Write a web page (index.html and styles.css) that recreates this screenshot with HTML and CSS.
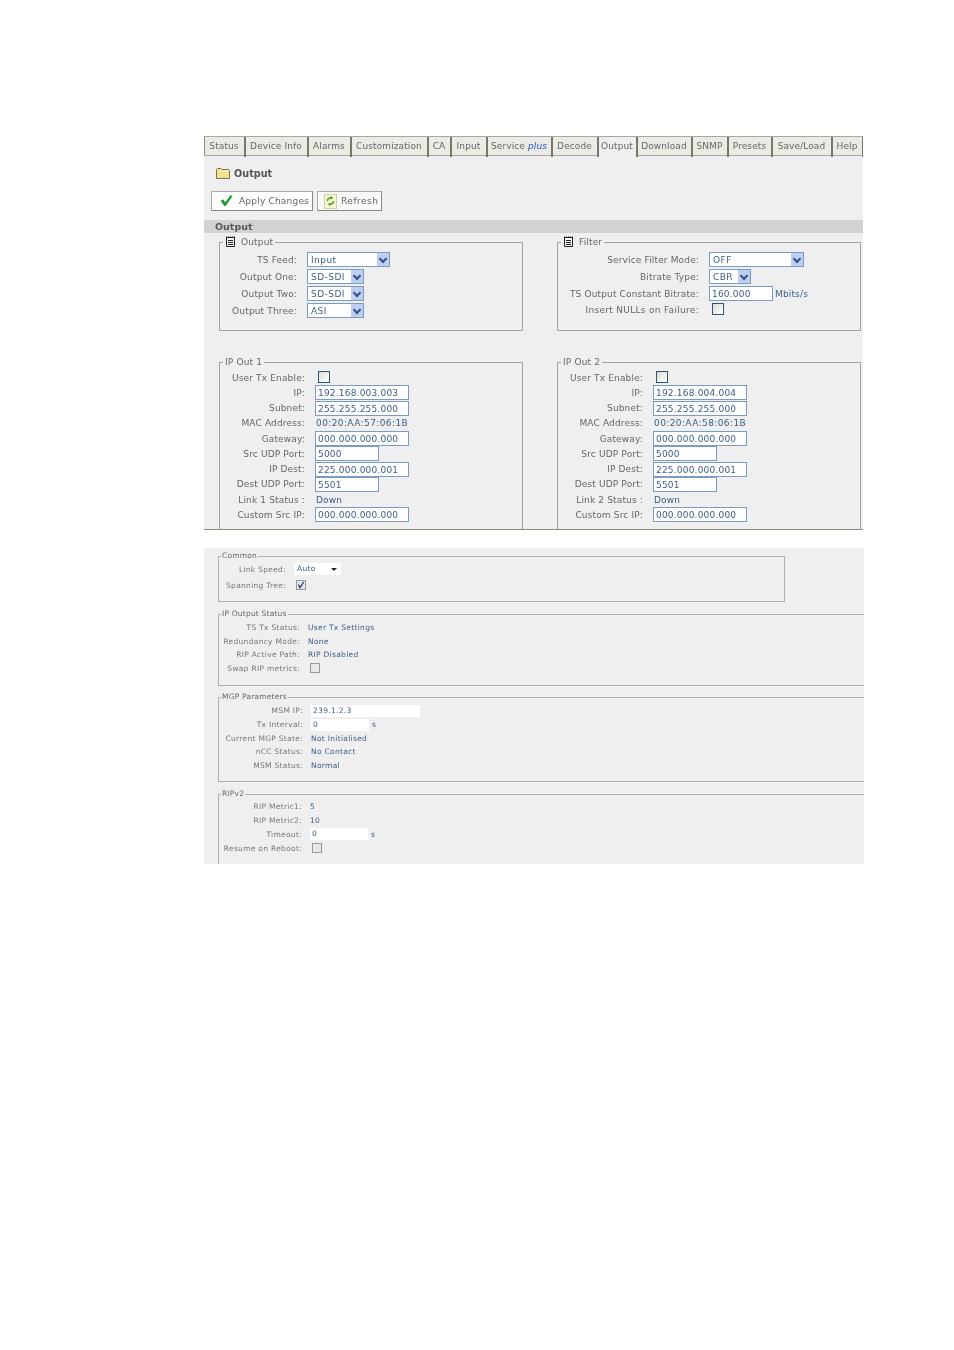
FILE: index.html
```html
<!DOCTYPE html>
<html lang="en">
<head>
<meta charset="utf-8">
<title>Output</title>
<link rel="stylesheet" href="styles.css">
</head>
<body>
<main class="page">
  <section class="panel">
    <nav class="tabs">
      <a class="tab">Status</a><a class="tab">Device Info</a><a class="tab">Alarms</a><a class="tab">Customization</a><a class="tab">CA</a><a class="tab">Input</a><a class="tab">Service <em>plus</em></a><a class="tab">Decode</a><a class="tab active">Output</a><a class="tab">Download</a><a class="tab">SNMP</a><a class="tab">Presets</a><a class="tab">Save/Load</a><a class="tab">Help</a>
    </nav>
    <h1 class="title">
      <svg class="folder" viewBox="0 0 14 11" width="14" height="11"><path d="M.5 10.5V1.5L1.5.5H5L6 1.5H12.5L13.500 2.500V10.500Z" fill="#f3e28c" stroke="#77735a"/><path d="M1 3H13" stroke="#fff6c0"/></svg>
      Output
    </h1>
    <div class="actions">
      <button class="btn btn-apply"><svg viewBox="0 0 14 13" width="13" height="11"><path d="M0 7L3 5L5.500 8.500L12 0L14 1.500L6 13H4.500Z" fill="#1f9a2e"/></svg>Apply Changes</button>
      <button class="btn btn-refresh"><span class="refresh-icon"><svg viewBox="0 0 12 13" width="12" height="13"><path d="M6 1L9 3L6 5V3.800C4.500 3.800 3.500 5 3.500 6.500H2C2 4 3.500 2.400 6 2.300Z" fill="#3a9a2a"/><path d="M6 12L3 10L6 8V9.200C7.500 9.200 8.500 8 8.500 6.500H10C10 9 8.500 10.600 6 10.700Z" fill="#3a9a2a"/></svg></span>Refresh</button>
    </div>
    <h2 class="band">Output</h2>

    <div class="columns top">
      <fieldset class="box box-output">
        <legend><svg class="note" viewBox="0 0 11 11" width="11" height="11"><path d="M1.500 1.500H9.500V10.500H1.500Z" fill="#fff" stroke="#222"/><path d="M1.500 .5V2M3.500 .5V2M5.500 .5V2M7.500 .5V2M9.500 .5V2M3 4.500H8M3 6.500H8M3 8.500H8" stroke="#222" fill="none"/></svg> Output</legend>
        <div class="form form-a">
          <span class="lbl">TS Feed:</span><span class="select w83"><span>Input</span><i class="arrow"></i></span>
          <span class="lbl">Output One:</span><span class="select w57"><span>SD-SDI</span><i class="arrow"></i></span>
          <span class="lbl">Output Two:</span><span class="select w57"><span>SD-SDI</span><i class="arrow"></i></span>
          <span class="lbl">Output Three:</span><span class="select w57"><span>ASI</span><i class="arrow"></i></span>
        </div>
      </fieldset>
      <fieldset class="box box-filter">
        <legend><svg class="note" viewBox="0 0 11 11" width="11" height="11"><path d="M1.500 1.500H9.500V10.500H1.500Z" fill="#fff" stroke="#222"/><path d="M1.500 .5V2M3.500 .5V2M5.500 .5V2M7.500 .5V2M9.500 .5V2M3 4.500H8M3 6.500H8M3 8.500H8" stroke="#222" fill="none"/></svg> Filter</legend>
        <div class="form form-b">
          <span class="lbl">Service Filter Mode:</span><span class="select w95"><span>OFF</span><i class="arrow"></i></span>
          <span class="lbl">Bitrate Type:</span><span class="select w42"><span>CBR</span><i class="arrow"></i></span>
          <span class="lbl">TS Output Constant Bitrate:</span><span class="inline"><span class="field w64">160.000</span><span class="val">Mbits/s</span></span>
          <span class="lbl lbl-wide">Insert NULLs on Failure:</span><span class="check"></span>
        </div>
      </fieldset>
    </div>

    <div class="columns bottom">
      <fieldset class="box box-ip">
        <legend>IP Out 1</legend>
        <div class="form form-ip">
          <span class="lbl">User Tx Enable:</span><span class="check"></span>
          <span class="lbl">IP:</span><span class="field w94">192.168.003.003</span>
          <span class="lbl">Subnet:</span><span class="field w94">255.255.255.000</span>
          <span class="lbl">MAC Address:</span><span class="val mac">00:20:AA:57:06:1B</span>
          <span class="lbl">Gateway:</span><span class="field w94">000.000.000.000</span>
          <span class="lbl">Src UDP Port:</span><span class="field w64">5000</span>
          <span class="lbl">IP Dest:</span><span class="field w94">225.000.000.001</span>
          <span class="lbl">Dest UDP Port:</span><span class="field w64">5501</span>
          <span class="lbl">Link 1 Status :</span><span class="val">Down</span>
          <span class="lbl">Custom Src IP:</span><span class="field w94">000.000.000.000</span>
        </div>
      </fieldset>
      <fieldset class="box box-ip">
        <legend>IP Out 2</legend>
        <div class="form form-ip">
          <span class="lbl">User Tx Enable:</span><span class="check"></span>
          <span class="lbl">IP:</span><span class="field w94">192.168.004.004</span>
          <span class="lbl">Subnet:</span><span class="field w94">255.255.255.000</span>
          <span class="lbl">MAC Address:</span><span class="val mac">00:20:AA:58:06:1B</span>
          <span class="lbl">Gateway:</span><span class="field w94">000.000.000.000</span>
          <span class="lbl">Src UDP Port:</span><span class="field w64">5000</span>
          <span class="lbl">IP Dest:</span><span class="field w94">225.000.000.001</span>
          <span class="lbl">Dest UDP Port:</span><span class="field w64">5501</span>
          <span class="lbl">Link 2 Status :</span><span class="val">Down</span>
          <span class="lbl">Custom Src IP:</span><span class="field w94">000.000.000.000</span>
        </div>
      </fieldset>
    </div>
  </section>

  <section class="panel2">
    <fieldset class="fs fs-common">
      <legend>Common</legend>
      <div class="form2 f-common">
        <span class="lbl">Link Speed:</span><span class="dd">Auto<i class="dd-arrow"></i></span>
        <span class="lbl">Spanning Tree:</span><span class="tick"><svg viewBox="0 0 9 9" width="9" height="9"><path d="M1.500 4L3.500 7.500L7.500 1" fill="none" stroke="#33447a" stroke-width="1.500"/></svg></span>
      </div>
    </fieldset>
    <fieldset class="fs fs-status">
      <legend>IP Output Status</legend>
      <div class="form2 f-status">
        <span class="lbl">TS Tx Status:</span><span class="val">User Tx Settings</span>
        <span class="lbl">Redundancy Mode:</span><span class="val">None</span>
        <span class="lbl">RIP Active Path:</span><span class="val">RIP Disabled</span>
        <span class="lbl">Swap RIP metrics:</span><span class="tick"></span>
      </div>
    </fieldset>
    <fieldset class="fs fs-mgp">
      <legend>MGP Parameters</legend>
      <div class="form2 f-mgp">
        <span class="lbl">MSM IP:</span><span class="inp w109">239.1.2.3</span>
        <span class="lbl">Tx Interval:</span><span class="inline2"><span class="inp w58">0</span><span class="val">s</span></span>
        <span class="lbl">Current MGP State:</span><span class="val">Not Initialised</span>
        <span class="lbl">nCC Status:</span><span class="val">No Contact</span>
        <span class="lbl">MSM Status:</span><span class="val">Normal</span>
      </div>
    </fieldset>
    <fieldset class="fs fs-rip">
      <legend>RIPv2</legend>
      <div class="form2 f-rip">
        <span class="lbl">RIP Metric1:</span><span class="val">5</span>
        <span class="lbl">RIP Metric2:</span><span class="val">10</span>
        <span class="lbl">Timeout:</span><span class="inline2"><span class="inp w58">0</span><span class="val">s</span></span>
        <span class="lbl">Resume on Reboot:</span><span class="tick"></span>
      </div>
    </fieldset>
  </section>
</main>
</body>
</html>
```
FILE: styles.css
```css
* { box-sizing: border-box; }
html, body { margin: 0; background: #fff; }
body { font-family: "DejaVu Sans", Verdana, sans-serif; font-size: 9px; color: #666; }
.page { padding: 136px 0 0 204px; width: 954px; height: 1350px; }

/* top panel */
.panel { width: 659px; height: 394px; background: #efefef; border-bottom: 1px solid #8c8c7c; overflow: hidden; filter: blur(.25px); }
.tabs { display: grid; height: 20px; grid-template-columns: 41px 63px 43px 77px 23px 36px 65px 46px 39px 55px 36px 44px 60px 31px; background: #ebebe6; border-top: 1px solid #a8a8a0; border-bottom: 1px solid #a8a8a0; border-left: 1px solid #8c8c80; }
.tab { display: flex; align-items: center; justify-content: center; border-right: 2px solid #77776c; color: #666; white-space: nowrap; letter-spacing: .1px; padding: 0 1px 2px 0; }
.tab em { color: #2a50c8; margin-left: 3px; }
.tab.active { background: #efefef; height: 20px; }
.title { margin: 0; height: 35px; padding: 0 0 0 12px; display: flex; align-items: center; gap: 4px; font-size: 9.700px; font-weight: bold; color: #555; }
.folder { flex: none; }
.actions { display: flex; gap: 4px; height: 29px; padding: 0 0 0 7px; }
.btn { font: inherit; color: #666; height: 20px; background: #fff; border: 1px solid #aaa; border-right-color: #888; border-bottom-color: #888; display: flex; align-items: center; padding: 0; letter-spacing: .2px; }
.btn-apply { width: 102px; gap: 6px; padding-left: 8px; }
.btn-apply svg { margin-top: -2px; }
.btn-refresh { width: 65px; gap: 4px; padding-left: 6px; background: #f9f9f9; letter-spacing: .5px; }
.refresh-icon { width: 13px; height: 15px; background: #f8f6c8; border: 1px solid #cfcfa8; display: flex; align-items: center; justify-content: center; }
.refresh-icon svg { width: 11px; height: 12px; }
.band { margin: 0; height: 13px; line-height: 13px; background: #d2d2d2; padding-left: 11px; font-size: 9.500px; font-weight: bold; color: #555; }

.columns { display: grid; grid-template-columns: 304px 304px; column-gap: 34px; margin-left: 15px; }
.top { height: 120px; margin-top: 3px; }
.bottom { height: 175px; }
.box { margin: 0; padding: 0; min-width: 0; border: 1px solid #a3a3a3; position: relative; }
.box legend { margin-left: 3px; padding: 0 2px; height: 12px; line-height: 12px; letter-spacing: .15px; color: #666; }
.note { vertical-align: -2px; margin-right: 2px; }
.box-output, .box-filter { height: 95px; margin-top: 0; }
.box-ip { border-bottom: 0; height: 175px; }

.form { display: grid; align-items: center; letter-spacing: .15px; }
.lbl { text-align: right; color: #666; white-space: nowrap; }
.lbl-wide { letter-spacing: .3px; }
.val { color: #3b5e88; white-space: nowrap; }
.form-a { grid-template-columns: 77px 83px; grid-auto-rows: 17px; column-gap: 10px; padding-top: 3px; }
.form-b { grid-template-columns: 141px auto; grid-template-rows: 17px 17px 17px 15px; column-gap: 10px; justify-content: start; padding-top: 3px; }
.form-b .check { margin-top: -1px; }
.form-ip { grid-template-columns: 85px auto; grid-auto-rows: 15.250px; column-gap: 10px; justify-content: start; padding-top: 2px; }
.form-ip .val { padding-left: 1px; }
.form-ip .check { margin-top: -1px; }
.mac { letter-spacing: .4px; }
.field { display: block; height: 15px; line-height: 14px; background: #fff; border: 1px solid #7a9cc0; color: #3b5e88; padding-left: 2px; letter-spacing: .2px; }
.w94 { width: 94px; }
.w64 { width: 64px; }
.inline { display: flex; align-items: center; gap: 2px; }
.select { display: flex; justify-content: space-between; align-items: stretch; height: 15px; line-height: 14px; background: #fff; border: 1px solid #7a9cc0; color: #3b5e88; padding-left: 3px; letter-spacing: .45px; }
.w83 { width: 83px; }
.w57 { width: 57px; }
.w95 { width: 95px; }
.w42 { width: 42px; }
.arrow { width: 12px; background: #c0cff0; position: relative; }
.arrow::before { content: ""; position: absolute; left: 3px; top: 3px; width: 4px; height: 4px; border-right: 2px solid #2f4f90; border-bottom: 2px solid #2f4f90; transform: rotate(45deg); }
.check { display: block; width: 12px; height: 12px; background: linear-gradient(135deg, #dcdcd4, #fff); border: 1px solid #2f5478; margin-left: 3px; }

/* lower panel */
.panel2 { width: 660px; height: 316px; margin-top: 18px; background: #efefef; overflow: hidden; padding: 3px 0 0 14px; font-size: 7.500px; filter: blur(.45px); color: #777; }
.fs { margin: 0; padding: 0; min-width: 0; border: 1px solid #b0b0b0; }
.fs legend { margin-left: 2px; padding: 0 1px; height: 10px; line-height: 10px; letter-spacing: .2px; color: #666; }
.fs-common { width: 567px; height: 51px; }
.fs-status { width: 660px; height: 77px; margin-top: 7px; border-right: 0; }
.fs-mgp { width: 660px; height: 90px; margin-top: 6px; border-right: 0; }
.fs-rip { width: 660px; height: 80px; margin-top: 7px; border-right: 0; border-bottom: 0; }
.form2 { display: grid; align-items: center; justify-content: start; letter-spacing: .3px; }
.form2 .lbl { color: #777; }
.f-common { grid-template-columns: 67px auto; grid-auto-rows: 16px; column-gap: 8px; padding-top: 0; }
.f-status { grid-template-columns: 81px auto; grid-auto-rows: 13.500px; column-gap: 8px; padding-top: 2px; }
.f-mgp { grid-template-columns: 84px auto; grid-auto-rows: 13.700px; column-gap: 8px; padding-top: 2px; }
.f-rip { grid-template-columns: 83px auto; grid-auto-rows: 13.800px; column-gap: 8px; padding-top: 1px; }
.dd { position: relative; width: 47px; height: 12px; line-height: 12px; padding-left: 3px; background: #fff; color: #3b5e88; }
.dd-arrow { position: absolute; right: 4px; top: 5px; border: 3px solid transparent; border-top: 3px solid #222; border-bottom: 0; }
.tick { display: block; width: 10px; height: 10px; background: #e8e8e8; border: 1px solid #999; margin-left: 2px; }
.tick svg { display: block; width: 8px; height: 8px; }
.inp { display: block; height: 12px; line-height: 12px; background: #fff; padding-left: 2px; color: #3b5e88; }
.w109 { width: 109px; }
.w58 { width: 58px; }
.inline2 { display: flex; align-items: center; gap: 3px; }
```
